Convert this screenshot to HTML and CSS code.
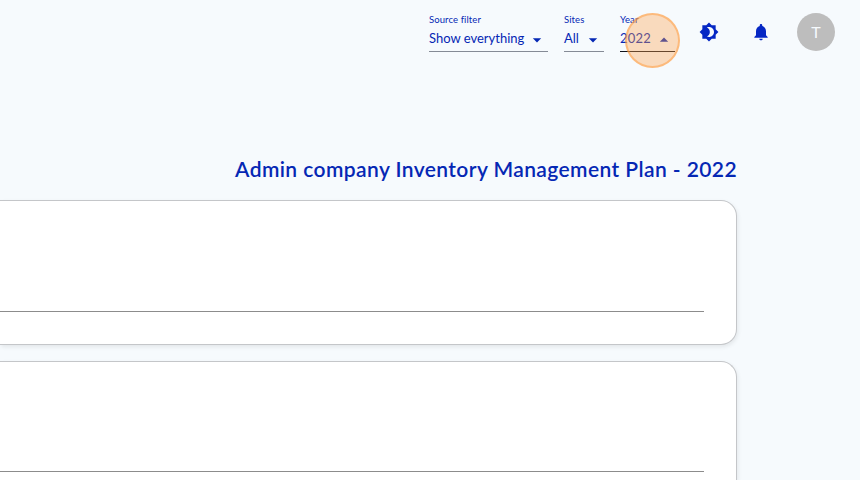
FILE: index.html
```html
<!DOCTYPE html>
<html lang="en">
<head>
    <meta charset="UTF-8">
    <title>Inventory Management Plan</title>
    <link rel="stylesheet" href="styles.css">
</head>
<body>
    <header class="topbar">
        <div class="field field-source">
            <label>Source filter</label>
            <div class="select">
                <span class="value">Show everything</span>
                <svg class="arrow" viewBox="0 0 24 24"><path d="M7 10l5 5 5-5z"/></svg>
            </div>
        </div>
        <div class="field field-sites">
            <label>Sites</label>
            <div class="select">
                <span class="value">All</span>
                <svg class="arrow" viewBox="0 0 24 24"><path d="M7 10l5 5 5-5z"/></svg>
            </div>
        </div>
        <div class="field field-year open">
            <label>Year</label>
            <div class="select">
                <span class="value">2022</span>
                <svg class="arrow" viewBox="0 0 24 24"><path d="M7 10l5 5 5-5z"/></svg>
            </div>
            <span class="click-marker"></span>
        </div>
        <svg class="icon icon-theme" viewBox="0 0 24 24"><path d="M20 8.69V4h-4.69L12 .69 8.69 4H4v4.69L.69 12 4 15.31V20h4.69L12 23.31 15.31 20H20v-4.69L23.31 12 20 8.69zM12 18c-.89 0-1.74-.2-2.5-.55C11.56 16.5 13 14.42 13 12s-1.44-4.5-3.5-5.45C10.26 6.2 11.11 6 12 6c3.31 0 6 2.69 6 6s-2.69 6-6 6z"/></svg>
        <svg class="icon icon-bell" viewBox="0 0 24 24"><path d="M12 22c1.1 0 2-.9 2-2h-4c0 1.1.89 2 2 2zm6-6v-5c0-3.07-1.64-5.64-4.5-6.32V4c0-.83-.67-1.5-1.5-1.5s-1.5.67-1.5 1.5v.68C7.63 5.36 6 7.92 6 11v5l-2 2v1h16v-1l-2-2z"/></svg>
        <div class="avatar">T</div>
    </header>

    <main class="content">
        <h1>Admin company Inventory Management Plan - 2022</h1>
        <section class="card"><hr></section>
        <section class="card card-last"><hr></section>
    </main>
</body>
</html>
```

FILE: styles.css
```css
* {
    margin: 0;
    padding: 0;
    box-sizing: border-box;
}

body {
    height: 480px;
    overflow: hidden;
    background: #f6fafd;
    color: #0527b4;
    font-family: Lato, "Open Sans", sans-serif;
}

/* Top bar */
.topbar {
    display: flex;
    justify-content: flex-end;
    align-items: center;
    height: 64px;
    padding-right: 25px;
}

.field {
    position: relative;
    height: 39px;
    margin-right: 16px;
    border-bottom: 1px solid #858b96;
}

.field-source {
    width: 119px;
}

.field-sites {
    width: 40px;
}

.field-year {
    width: 55px;
    margin-right: 24px;
}

.field label {
    display: block;
    height: 12px;
    font-size: 9.5px;
    line-height: 13px;
    letter-spacing: 0.1px;
    white-space: nowrap;
}

.select {
    display: flex;
    justify-content: space-between;
    height: 26px;
}

.value {
    font-size: 13px;
    line-height: 26px;
    white-space: nowrap;
}

.field-year .value {
    letter-spacing: 0.2px;
}

.arrow {
    flex: none;
    width: 20px;
    height: 20px;
    margin: 5px 1px 0 -10px;
    fill: #0527b4;
}

.open {
    border-bottom-color: #10131c;
}

.open .arrow {
    transform: rotate(180deg);
}

/* Click highlight over the year select */
.click-marker {
    position: absolute;
    top: 0;
    left: 5px;
    width: 55px;
    height: 55px;
    border: 2px solid rgba(255, 153, 60, 0.5);
    border-radius: 50%;
    background: rgba(255, 160, 75, 0.36);
}

.icon {
    flex: none;
    width: 20px;
    height: 20px;
    fill: #0527c4;
}

.icon-theme {
    margin-right: 32px;
}

.icon-bell {
    margin-right: 26px;
}

.avatar {
    width: 38px;
    height: 38px;
    border-radius: 50%;
    background: #bdbdbd;
    color: #f6fafd;
    font-size: 16px;
    line-height: 37px;
    text-align: center;
}

/* Content */
.content {
    width: 745px;
    height: 416px;
    padding: 90px 8px 0 0;
    overflow: hidden;
}

h1 {
    height: 46px;
    font-size: 21px;
    font-weight: 600;
    line-height: 30px;
    letter-spacing: 0.41px;
    text-align: right;
    white-space: nowrap;
}

.card {
    height: 145px;
    margin-bottom: 16px;
    padding: 110px 32px 0 0;
    border: 1px solid #c4c6c9;
    border-left: none;
    border-radius: 0 16px 16px 0;
    background: #fff;
    box-shadow: 1px 2px 4px rgba(0, 0, 0, 0.08);
}

/* Runs off the bottom of the view */
.card-last {
    height: 119px;
    margin-bottom: 0;
    padding-top: 109px;
    border-bottom: none;
    border-radius: 0 16px 0 0;
}

.card hr {
    height: 1px;
    border: none;
    background: #8c8c8c;
}
```
